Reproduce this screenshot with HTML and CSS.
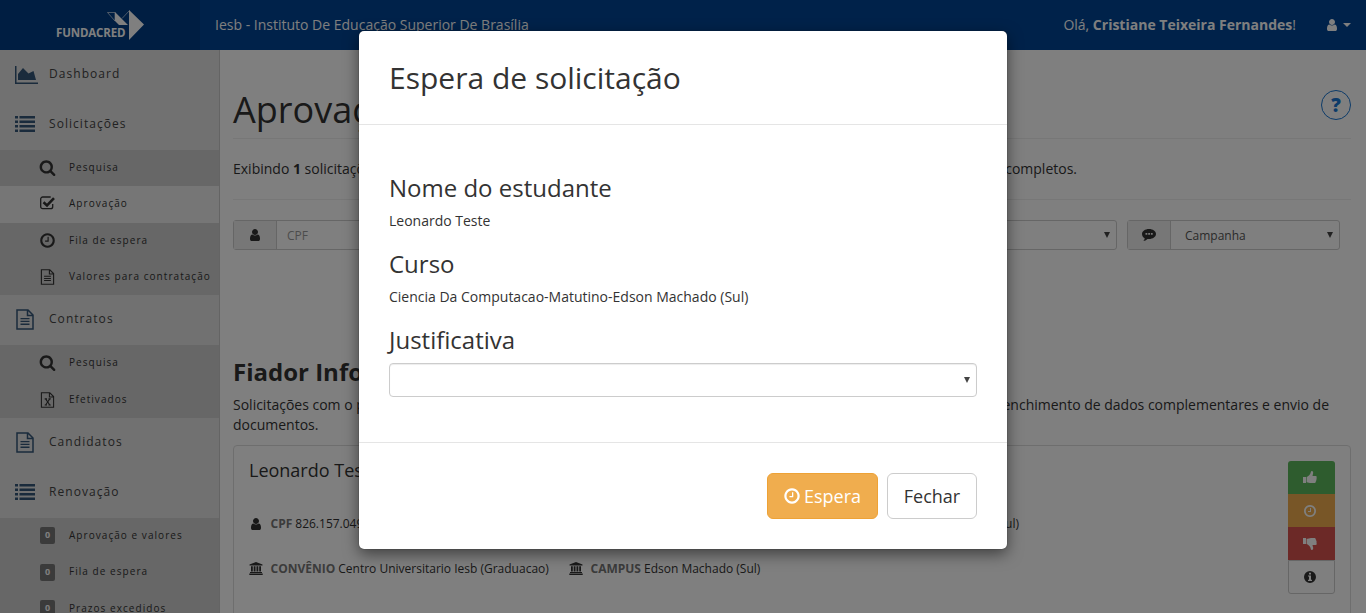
FILE: index.html
```html
<!DOCTYPE html>
<html lang="pt-BR">
<head>
<meta charset="utf-8">
<title>Fundacred - Aprovação</title>
<link rel="stylesheet" href="styles.css">
</head>
<body>
<svg class="defs" aria-hidden="true">
  <symbol id="search" viewBox="0 0 1792 1792"><path d="M1216 832q0-185-131.500-316.500T768 384 451.500 515.500 320 832t131.500 316.500T768 1280t316.500-131.500T1216 832zm512 832q0 52-38 90t-90 38q-54 0-90-38l-343-342q-179 124-399 124-143 0-273.500-55.500t-225-150-150-225T64 832t55.500-273.500 150-225 225-150T768 128t273.500 55.500 225 150 150 225T1472 832q0 220-124 399l343 343q37 37 37 90z"/></symbol>
  <symbol id="clock" viewBox="0 0 1792 1792"><path d="M1024 544v448q0 14-9 23t-23 9H672q-14 0-23-9t-9-23v-64q0-14 9-23t23-9h224V544q0-14 9-23t23-9h64q14 0 23 9t9 23zm416 352q0-148-73-273t-198-198-273-73-273 73-198 198-73 273 73 273 198 198 273 73 273-73 198-198 73-273zm224 0q0 209-103 385.500T1281.500 1561.500 896 1664t-385.500-102.500T231 1281.500 128 896t103-385.500T510.500 231 896 128t385.500 103T1561 510.500 1664 896z"/></symbol>
  <symbol id="user" viewBox="0 0 1792 1792"><path d="M1536 1399q0 109-62.500 187t-150.500 78H469q-88 0-150.500-78T256 1399q0-85 8.500-160.500t31.500-152 58.500-131 94-89T583 832q131 128 313 128t313-128q76 0 134.500 34.500t94 89 58.500 131 31.500 152 8.500 160.500zm-256-887q0 159-112.500 271.500T896 896 624.500 783.500 512 512t112.500-271.500T896 128t271.500 112.500T1280 512z"/></symbol>
  <symbol id="file" viewBox="0 0 18 21"><path d="M1 1h11l5 5v14H1zM11.500 1v5.500H17" fill="none" stroke="currentColor" stroke-width="1.500"/><path d="M4.500 9h9v1.300h-9zm0 2.800h9v1.300h-9zm0 2.800h9v1.300h-9z"/></symbol>
  <symbol id="excel" viewBox="0 0 18 21"><path d="M1 1h11l5 5v14H1zM11.500 1v5.500H17M6.500 9l5.500 8M12 9l-5.500 8M5.300 9h3M10.300 9h3M5.300 17h3M10.300 17h3" fill="none" stroke="currentColor" stroke-width="1.400"/></symbol>
  <symbol id="list" viewBox="0 0 20 16"><path d="M0 0h3v2.500H0zm4.500 0H20v2.500H4.500zM0 4.500h3V7H0zm4.500 0H20V7H4.500zM0 9h3v2.500H0zm4.500 0H20v2.500H4.500zM0 13.500h3V16H0zm4.500 0H20V16H4.500z"/></symbol>
  <symbol id="area" viewBox="0 0 23 18"><path d="M0 0h1.500v16.500H23V18H0zM3 14V8l5-6 5.500 5.500L18.500 5 21 14z"/></symbol>
  <symbol id="check" viewBox="0 0 16 14"><path d="M12.700 8v2.700a2 2 0 0 1-2 2H2.700a2 2 0 0 1-2-2V3a2 2 0 0 1 2-2h8" fill="none" stroke="currentColor" stroke-width="1.300"/><path d="M3.500 6.300 7 9.500l7-7.400" fill="none" stroke="currentColor" stroke-width="2.600"/></symbol>
  <symbol id="bank" viewBox="0 0 14 13"><path d="M7 0l6.500 2.600v1H.5v-1zM2 4.300h1.800v5.200H2zm2.700 0h1.800v5.200H4.700zm2.800 0h1.800v5.200H7.500zm2.700 0H12v5.200h-1.800zM1 10h12v1H1zm-.7 1.500h13.400V13H.300z"/></symbol>
  <symbol id="thumb" viewBox="0 0 14 13"><path d="M0 6h3v6H0zM3.600 6c1.500-.3 2.700-1.900 3.500-3 .7-.8.500-2.800 1.500-3 1.700 0 1.900 1.800 1.300 3.200L9.500 5h3c1.500 0 1.500 1.500.9 2 .5.800.3 1.500-.2 1.900.2.900 0 1.400-.5 1.700.1 1-.5 1.500-1.500 1.500H8c-1.500 0-3-.8-4.400-.8z"/></symbol>
  <symbol id="info" viewBox="0 0 12 12"><path fill-rule="evenodd" d="M6 0a6 6 0 1 1 0 12A6 6 0 0 1 6 0zM5 1.800v1.700h2V1.800zM4 4.500v1h1v3.200H4v1.300h4V8.700H7V4.500z"/></symbol>
  <symbol id="chat" viewBox="0 0 14 12"><path fill-rule="evenodd" d="M7 0c3.900 0 7 2.200 7 5s-3.100 5-7 5l-1.500-.1C4.300 11.100 2.700 11.800 1.300 12c.7-.7 1.200-1.500 1.400-2.800C1 8.300 0 6.700 0 5c0-2.800 3.100-5 7-5zM3.500 4v1.800h1.800V4zm2.700 0v1.800H8V4zm2.700 0v1.800h1.800V4z"/></symbol>
  <symbol id="arrow" viewBox="0 0 6 6"><path d="M0 0h6L3 6z"/></symbol>
</svg>

<header class="topbar">
  <div class="brand">
    <span class="brand-name">FUNDACRED</span>
    <svg class="brand-mark" viewBox="0 0 38 30"><path d="M22 0l15 14.500L22 30zM8 2l13 13h-9l-4-4z"/><path d="M.5 2.500H8V11zM15 8.500l7.500-8" fill="none" stroke="currentColor" stroke-width=".6"/></svg>
  </div>
  <div class="school">Iesb - Instituto De Educação Superior De Brasília</div>
  <div class="hello">Olá, <b>Cristiane Teixeira Fernandes</b>!</div>
  <div class="account"><svg class="i14"><use href="#user"/></svg><span class="caret"></span></div>
</header>

<div class="shell">
  <nav class="sidebar">
    <a class="item"><svg class="i-area"><use href="#area"/></svg>Dashboard</a>
    <a class="item"><svg class="i-list"><use href="#list"/></svg>Solicitações</a>
    <div class="sub">
      <a><svg class="i-sub"><use href="#search"/></svg>Pesquisa</a>
      <a class="active"><svg class="i-check"><use href="#check"/></svg>Aprovação</a>
      <a><svg class="i-sub"><use href="#clock"/></svg>Fila de espera</a>
      <a><svg class="i-doc"><use href="#file"/></svg>Valores para contratação</a>
    </div>
    <a class="item"><svg class="i-file"><use href="#file"/></svg>Contratos</a>
    <div class="sub">
      <a><svg class="i-sub"><use href="#search"/></svg>Pesquisa</a>
      <a><svg class="i-doc"><use href="#excel"/></svg>Efetivados</a>
    </div>
    <a class="item"><svg class="i-file"><use href="#file"/></svg>Candidatos</a>
    <a class="item"><svg class="i-list"><use href="#list"/></svg>Renovação</a>
    <div class="sub">
      <a><span class="count">0</span>Aprovação e valores</a>
      <a><span class="count">0</span>Fila de espera</a>
      <a><span class="count">0</span>Prazos excedidos</a>
    </div>
  </nav>

  <main class="content">
    <div class="title"><h1>Aprovação</h1><span class="help">?</span></div>
    <p class="summary"><span>Exibindo <b>1</b> solicitações</span><span>completos.</span></p>
    <div class="filters">
      <div class="field"><span class="addon"><svg class="i14"><use href="#user"/></svg></span><span class="box muted">CPF</span></div>
      <div class="field wide"><span class="box"><svg class="arrow"><use href="#arrow"/></svg></span></div>
      <div class="field campaign"><span class="addon"><svg class="i-chat"><use href="#chat"/></svg></span><span class="box">Campanha<svg class="arrow"><use href="#arrow"/></svg></span></div>
    </div>
    <h2>Fiador Informado</h2>
    <p class="lead"><span>Solicitações com o processo</span><span>preenchimento de dados complementares e envio de</span></p>
    <p class="lead">documentos.</p>
    <section class="card">
      <div class="card-main">
        <h3>Leonardo Teste</h3>
        <div class="facts first"><span class="fact"><svg class="i14"><use href="#user"/></svg><b>CPF</b> 826.157.049</span><span>Edson Machado (Sul)</span></div>
        <div class="facts"><span class="fact convenio"><svg class="i-bank"><use href="#bank"/></svg><b>CONVÊNIO</b> Centro Universitario Iesb (Graduacao)</span><span class="fact"><svg class="i-bank"><use href="#bank"/></svg><b>CAMPUS</b> Edson Machado (Sul)</span></div>
      </div>
      <div class="actions">
        <span class="act green"><svg class="i-act"><use href="#thumb"/></svg></span>
        <span class="act orange"><svg class="i-clk"><use href="#clock"/></svg></span>
        <span class="act red"><svg class="i-act down"><use href="#thumb"/></svg></span>
        <span class="act plain"><svg class="i-info"><use href="#info"/></svg></span>
      </div>
    </section>
  </main>
</div>

<div class="backdrop">
  <div class="modal" role="dialog">
    <div class="modal-head"><h4>Espera de solicitação</h4></div>
    <div class="modal-body">
      <h5>Nome do estudante</h5>
      <p>Leonardo Teste</p>
      <h5>Curso</h5>
      <p>Ciencia Da Computacao-Matutino-Edson Machado (Sul)</p>
      <h5>Justificativa</h5>
      <div class="select"><svg class="arrow"><use href="#arrow"/></svg></div>
    </div>
    <div class="modal-foot">
      <button class="btn wait"><svg class="i-btn"><use href="#clock"/></svg>Espera</button>
      <button class="btn close">Fechar</button>
    </div>
  </div>
</div>
</body>
</html>
```

FILE: styles.css
```css
* { box-sizing: border-box; }
html, body { height: 100%; overflow: hidden; }
body { margin: 0; font: 14px/20px "Open Sans", sans-serif; color: #333; background: #fff; }
h1, h2, h3, h4, h5, p { margin: 0; font-weight: 400; }
svg { fill: currentColor; flex: none; display: block; }
.defs { display: none; }
.i14 { width: 14px; height: 14px; }

.topbar { display: flex; align-items: center; height: 50px; background: #004494; color: #fff; }
.brand { display: flex; align-items: center; width: 200px; height: 50px; padding-left: 56px; background: #003d85; }
.brand-name { width: 70px; padding-top: 16px; font: 700 11.500px/14px "Open Sans", sans-serif; letter-spacing: -.15px; }
.brand-mark { width: 38px; height: 30px; margin-left: -19px; }
.school { padding-left: 15px; flex: 1; }
.hello { padding-right: 29px; }
.account { display: flex; align-items: center; gap: 4px; padding-right: 15px; }
.caret { border: 4px solid transparent; border-top-color: #fff; border-bottom: 0; }

.shell { display: flex; }
.sidebar { width: 220px; height: 563px; overflow: hidden; flex: none; background: #e2e2e2; border-right: 1px solid #c8c8c8; }
.item { display: flex; align-items: center; height: 50px; padding: 0 0 2px 15px; font-size: 12px; letter-spacing: 1.050px; color: #444; }
.item svg { color: #345678; }
.i-area { width: 23px; height: 18px; margin: 2px 11px 0 0; }
.i-list { width: 20px; height: 16px; margin: 0 14px 0 0; }
.i-file { width: 18px; height: 21px; margin: 1px 15px 0 1px; }
.sub { background: #cecece; }
.sub a { display: flex; align-items: center; height: 36.300px; padding: 0 0 2px 39px; font-size: 10px; letter-spacing: 1.050px; color: #333; white-space: nowrap; }
.sub .active { background: #ededed; }
.i-sub { width: 17px; height: 17px; margin: 1px 13px 0 0; }
.i-check { width: 16px; height: 14px; margin: 0 13px 0 1px; }
.i-doc { width: 15px; height: 16px; margin: 2px 14px 0 1px; }
.count { width: 15px; height: 17px; margin: 2px 14px 0 1px; border-radius: 2px; background: #777; color: #fff; font: 700 9px/16px "Open Sans", sans-serif; letter-spacing: 0; text-align: center; }

.content { flex: 1; padding: 38px 15px 0 13px; }
.title { display: flex; justify-content: space-between; align-items: center; height: 51px; border-bottom: 1px solid #eee; }
h1 { margin-top: -6px; font-size: 36px; line-height: 44px; }
.help { width: 30px; height: 30px; margin-top: -16px; border: 1px solid #1976d2; border-radius: 50%; color: #1976d2; font-size: 19px; line-height: 28px; font-weight: 800; text-align: center; }
.summary { display: flex; justify-content: space-between; height: 61px; padding: 20px 274px 0 0; border-bottom: 1px solid #eee; }
.filters { display: flex; gap: 10px; padding: 20px 11px 0 0; }
.field { display: flex; width: 340px; height: 30px; border: 1px solid #ccc; border-radius: 3px; font-size: 12px; line-height: 29px; }
.wide { flex: 1; }
.campaign { width: 213px; }
.addon { display: flex; align-items: center; justify-content: center; width: 43px; background: #eee; border-right: 1px solid #ccc; }
.box { display: flex; flex: 1; justify-content: space-between; padding: 0 6px 0 14px; color: #555; }
.muted { padding-left: 10px; color: #999; }
.box .arrow { margin: 11px 0 0 auto; }
.arrow { width: 6px; height: 6px; color: #444; }
.i-chat { width: 14px; height: 12px; }
h2 { margin: 108px 0 10px; font-size: 24px; line-height: 27px; font-weight: 700; }
.lead { display: flex; justify-content: space-between; padding-right: 22px; }
.card { display: flex; justify-content: space-between; height: 190px; margin-top: 10px; padding: 15px; border: 1px solid #ddd; border-radius: 4px; }
.card-main { flex: 1; }
h3 { margin: -1px 0 0; font-size: 18px; line-height: 20px; }
.facts { display: flex; font-size: 12px; line-height: 17px; }
.first { justify-content: space-between; padding-right: 269px; margin: 35px 0 28px; }
.facts b { margin-right: 3px; color: #777; }
.fact { display: flex; align-items: center; }
.fact .i14 { margin-right: 7.500px; }
.convenio { width: 320px; }
.i-bank { width: 14px; height: 13px; margin-right: 7.500px; }
.actions { width: 47px; }
.act { display: flex; align-items: center; justify-content: center; height: 33px; padding-right: 3px; color: #fff; }
.green { background: #5cb85c; border-radius: 3px 3px 0 0; }
.orange { background: #f0ad4e; }
.red { background: #d9534f; }
.plain { height: 34px; border: 1px solid #ccc; border-radius: 0 0 3px 3px; color: #333; }
.i-act { width: 14px; height: 13px; }
.down { transform: scaleY(-1); }
.i-clk { width: 14px; height: 14px; }
.i-info { width: 12px; height: 12px; }

/* Dialog overlay */
.backdrop { position: absolute; inset: 0; padding: 31px 0 0 359px; background: rgba(0, 0, 0, .5); }
.modal { width: 648px; height: 518px; background: #fff; border-radius: 5px; box-shadow: 0 5px 15px rgba(0, 0, 0, .5), 0 0 1px #222; }
.modal-head { height: 94px; padding: 26px 30px 0; border-bottom: 1px solid #e5e5e5; }
h4 { font-size: 30px; line-height: 42px; }
.modal-body { height: 318px; padding: 49px 30px 0; border-bottom: 1px solid #e5e5e5; }
h5 { font-size: 24px; line-height: 27px; }
.modal-body p { margin: 10px 0 19px; font-size: 14px; }
.select { display: flex; justify-content: flex-end; align-items: center; height: 34px; margin-top: 10px; padding-right: 6px; border: 1px solid #ccc; border-radius: 4px; box-shadow: inset 0 1px 1px rgba(0, 0, 0, .075); }
.modal-foot { display: flex; justify-content: flex-end; gap: 9px; padding: 30px 30px 0; }
.btn { display: flex; align-items: center; justify-content: center; height: 46px; padding: 0; border-radius: 6px; font: 18px/24px "Open Sans", sans-serif; }
.wait { width: 111px; gap: 3px; padding-right: 1px; border: 1px solid #eea236; background: #f0ad4e; color: #fff; }
.close { width: 90px; border: 1px solid #ccc; background: #fff; color: #333; }
.i-btn { width: 18px; height: 18px; }
```
